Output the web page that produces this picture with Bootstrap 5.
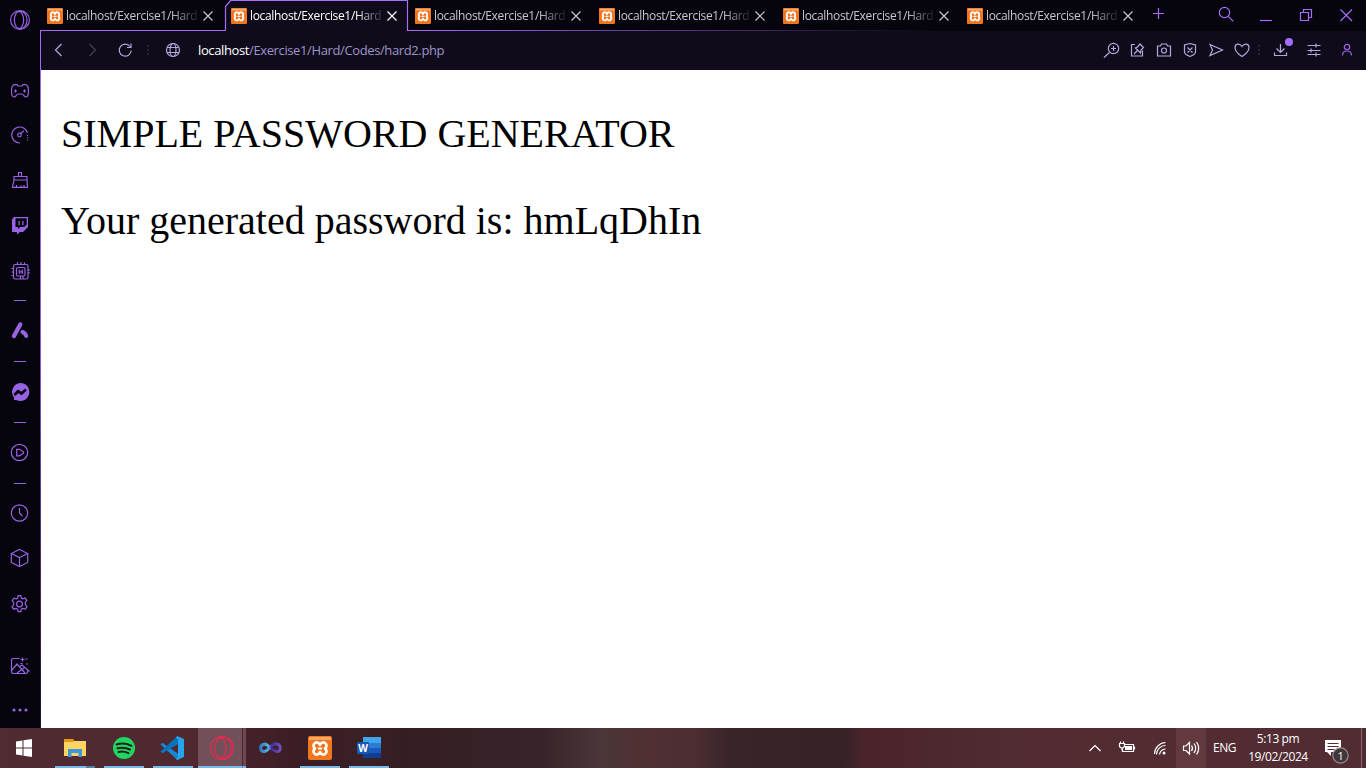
<!DOCTYPE html>
<html lang="en">
<head>
<meta charset="utf-8">
<meta name="viewport" content="width=device-width, initial-scale=1">
<title>localhost/Exercise1/Hard/Codes/hard2.php</title>
<link href="https://cdn.jsdelivr.net/npm/bootstrap@5.3.0/dist/css/bootstrap.min.css" rel="stylesheet">
<style>
:root{--accent:#a56dfb;--side:#9763e3;--soft:#b5a9dc;--dark:#06040c;--panel:#0f0b1b}
body{width:1366px;height:768px;overflow:hidden;font-family:"Open Sans","Noto Sans",sans-serif;background:#fff}
svg{display:block;flex:none;fill:none;stroke:currentColor;stroke-width:1.2}
svg .f{fill:currentColor;stroke:none}
.side{width:41px;background:var(--dark);color:var(--side);position:relative}
.side::after{content:"";position:absolute;right:0;top:30px;bottom:0;width:1px;background:linear-gradient(#a56dfb,#8d5cd8 45%,#4c3076 75%,#1c1030)}
.slot{height:45px}.slot-a{height:46px}.slot-d{height:15px;padding-right:2px}
.up{padding-bottom:2px}
.slot-d i{width:12px;height:1px;background:var(--side)}
.tabs{height:31px;background:var(--dark);position:relative}
.tabs .edge{position:absolute;left:0;top:0;z-index:1}
.tb{width:184px;height:31px;padding-left:6px;color:#c9c6d2;z-index:2;position:relative}
.tb.on{color:#fff}
.tb span{width:133px;font-size:12px;letter-spacing:-.34px;line-height:18px;margin-left:3px;margin-right:3px;-webkit-mask-image:linear-gradient(90deg,#000 106px,rgba(0,0,0,.15) 131px)}
.wb{width:40px;height:31px;color:var(--accent)}
.tools{height:39px;background:var(--panel);color:var(--soft);padding-bottom:1px}
.tools .q{width:26px}
.url{font-size:13px;letter-spacing:-.38px;color:#9f94c8;line-height:18px;margin-left:3px}
.url b{font-weight:400;color:#fff}
.page{padding:40px 20px;font-family:"Liberation Serif",serif;font-size:40px;line-height:47px;color:#000}
.page p{margin:0 0 40px}
.task{height:40px;color:#fff;background:linear-gradient(90deg,#502b31 0,#502930 190px,#46222a 245px,#3b1d24 300px,#3a2025 370px,#351e23 400px,#36242a 540px,#4a3638 600px,#503033 645px,#4c2d32 695px,#382529 730px,#362226 845px,#4b242b 865px,#502b31 1000px,#532c32 1100px,#512c32)}
.app{width:49px;height:40px;position:relative}
.app.run::after{content:"";position:absolute;left:5px;width:40px;bottom:0;height:2px;background:#76b9ed}
.app.multi::after{background:linear-gradient(90deg,#76b9ed 31px,#527fa4 31px)}
.app.cur{background:linear-gradient(90deg,transparent 1px,#735058 1px,#70505a 45px,#49292f 45px,#49292f 46px,#6a4a50 46px)}
.app.cur::after{left:1px;width:48px;background:linear-gradient(90deg,#76b9ed 44px,#5388b0 44px,#5388b0 45px,#76b9ed 45px)}
.tray{font-size:12px;line-height:18px;letter-spacing:-.4px}
.snd{background:#61393f}
.endline{width:1px;background:#8a6c70;margin-right:4px}
</style>
</head>
<body class="d-flex flex-column">
<svg width="0" height="0" class="position-absolute"><defs>
<linearGradient id="fade" gradientUnits="userSpaceOnUse" x1="366" y1="0" x2="900" y2="0"><stop stop-color="#a56dfb"/><stop offset="1" stop-color="#a56dfb" stop-opacity="0"/></linearGradient>
<linearGradient id="vs" gradientUnits="userSpaceOnUse" x1="13" y1="0" x2="36" y2="0"><stop stop-color="#2a73ba"/><stop offset=".4" stop-color="#55b1e8"/><stop offset=".55" stop-color="#452a9a"/><stop offset="1" stop-color="#7058c4"/></linearGradient>
<symbol id="xampp" viewBox="0 0 24 24"><rect width="24" height="24" rx="2" fill="#f0761f" stroke="none"/><path d="M1 1h22v3H1z" fill="#f9a764" stroke="none"/><path d="M12 9A3.300 3.300 0 1 0 7 12.500A3.300 3.300 0 1 0 12 16A3.300 3.300 0 1 0 17 12.500A3.300 3.300 0 1 0 12 9z" fill="none" stroke="#fff" stroke-width="2.700" stroke-linejoin="round"/><path d="M10 12.500h4" stroke="#fff" stroke-width="2"/></symbol>
<symbol id="x" viewBox="0 0 12 12"><path d="M1.500 1.500l9 9M10.500 1.500l-9 9"/></symbol>
</defs></svg>
<div class="d-flex flex-grow-1">
<aside class="side d-flex flex-column">
<div class="d-flex align-items-center ps-2" style="height:40px;margin-bottom:28px"><svg width="24" height="24"><circle cx="12" cy="12" r="9.400"/><ellipse cx="11" cy="12" rx="4.600" ry="8.500"/><path d="M9.500 4c7-2.500 9.500 4 9.500 8s-2.500 10.500-9.500 8"/></svg></div>
<div class="slot d-flex align-items-center ps-2"><svg width="24" height="24"><path d="M7 5.700h2l1 1.300h4l1-1.300h2c3 0 3.500 3 3.500 6.300 0 3-.4 6-2.500 6-2 0-2.500-3-4-3h-4c-1.500 0-2 3-4 3-2.100 0-2.500-3-2.500-6 0-3.300.5-6.300 3.500-6.300z"/><path d="M6 12h3M7.500 10.500v3M15 12h3M16.500 10.500v3"/></svg></div>
<div class="slot up d-flex align-items-center ps-2"><svg width="24" height="24"><path d="M12 20a8 8 0 1 1 7.500-10"/><path d="M19.500 12v5.500" stroke-dasharray="1 1.200"/><circle cx="11.500" cy="12" r="1.800"/><path d="M12.800 10.700l3-3"/></svg></div>
<div class="slot up d-flex align-items-center ps-2"><svg width="24" height="24"><path d="M10.500 8.500v-4h3v4M6 8.500h13v3.500H6zM6 12l-1.500 7.300h15L19 12M8.500 19v-2M16 19v-2M13 19v-1.500"/></svg></div>
<div class="slot up d-flex align-items-center ps-2"><svg width="24" height="24"><path class="f" fill-rule="evenodd" d="M6 4h14v10l-5 5h-3l-3 2.500V19H4V6.500zm1.500 1.200V14H10v2l2.200-2h4l2.500-2.500V5.200zM10.500 8h1.300v4h-1.300zm3.700 0h1.300v4h-1.300z"/></svg></div>
<div class="slot d-flex align-items-center ps-2"><svg width="24" height="24"><rect x="5.500" y="5.500" width="14.500" height="14.500" rx="1.500"/><rect x="8.500" y="8.500" width="8.500" height="8.500" rx="1.500"/><path d="M11.300 10.500v4.500M14.300 10.500v4.500M11 12.800h3.500M9.500 3v3M13 3v3M16.500 3.500v2M3.500 9.500h2M3.500 13h2M3.500 16.500h2M20 11h2M20 14h2M12.500 17v3M15 17v3"/></svg></div>
<div class="slot-d d-flex align-items-center justify-content-center"><i></i></div>
<div class="slot-a d-flex align-items-center ps-2"><svg width="24" height="24"><path d="M12.300 5.500L6 17" stroke-width="4.300" stroke-linecap="round"/><path d="M14.500 13c2 .7 3 1.700 3.700 4" stroke-width="4" stroke-linecap="round"/></svg></div>
<div class="slot-d d-flex align-items-center justify-content-center"><i></i></div>
<div class="slot-a d-flex align-items-center ps-2"><svg width="24" height="24"><path class="f" d="M12.200 3a9 9 0 1 1-4 17H6v-2.500A9 9 0 0 1 12.200 3z"/><path d="M6.500 15l3.500-3.700 3.500 2.200 4.500-4" stroke="#06040c" stroke-width="2.700"/></svg></div>
<div class="slot-d d-flex align-items-center justify-content-center"><i></i></div>
<div class="slot-a d-flex align-items-center ps-2"><svg width="24" height="24"><circle cx="11.500" cy="11.500" r="8.200"/><path d="M8.700 8.300v6.500h2.800l4-2.600v-1.400l-4-2.500z"/></svg></div>
<div class="slot-d d-flex align-items-center justify-content-center"><i></i></div>
<div class="slot up d-flex align-items-center ps-2"><svg width="24" height="24"><circle cx="11.500" cy="12" r="8.200"/><path d="M11.500 7v5l3 3.200"/></svg></div>
<div class="slot up d-flex align-items-center ps-2"><svg width="24" height="24"><path d="M11.500 3.500l8.200 4v9l-8.200 4-8.200-4v-9zM3.300 7.500l8.200 4 8.200-4M11.500 11.500v9"/></svg></div>
<div class="slot d-flex align-items-center ps-2"><svg width="24" height="24"><circle cx="11.500" cy="12" r="2.900"/><path d="M9.700 6l.5-2.300h2.600l.5 2.300 1.500.8 2.300-.8 1.700 2.400-1.500 1.800v2.400l1.700 1.900-1.700 2.500-2.500-.7-1.500.9-.5 2.500h-2.600L9.700 17.400l-1.500-.9-2.500.7L4 14.700l1.700-1.900v-2.200L4.200 8.700l1.700-2.500 2.300.7z"/></svg></div>
<div class="slot up d-flex align-items-center ps-2" style="margin-top:18px"><svg width="24" height="24"><path d="M11.500 4.500H5.200a1.700 1.700 0 0 0-1.700 1.700v11.600a1.700 1.700 0 0 0 1.700 1.700h12.600a1.700 1.700 0 0 0 1.700-1.700V17M4 16l5-6 8 9M11 13l3-2 7.500 6.500M9 19l7-5M14.500 3.500v4M12.500 5.500h4M17.500 5h2M12.500 9.500h2M18 10h2"/></svg></div>
<div class="d-flex align-items-center ps-2" style="height:39px;padding-top:3px"><svg width="24" height="24"><circle class="f" cx="6" cy="12" r="1.600"/><circle class="f" cx="12" cy="12" r="1.600"/><circle class="f" cx="18" cy="12" r="1.600"/></svg></div>
</aside>
<div class="flex-grow-1 d-flex flex-column">
<header class="tabs d-flex">
<svg class="edge" width="1325" height="31"><path d="M184.500 31V6l6-5.500h176V31z" fill="#0f0b1b" stroke="none"/><path d="M0 30.500h183.500q1 0 1-1V6.500l5-6h177V30.500" stroke="#a56dfb"/><path d="M366 30h959v1H366z" fill="url(#fade)" stroke="none"/></svg>
<div class="tb d-flex align-items-center text-nowrap"><svg width="16" height="16"><use href="#xampp"/></svg><span>localhost/Exercise1/Hard</span><svg width="12" height="12"><use href="#x"/></svg></div>
<div class="tb on d-flex align-items-center text-nowrap"><svg width="16" height="16"><use href="#xampp"/></svg><span>localhost/Exercise1/Hard</span><svg width="12" height="12"><use href="#x"/></svg></div>
<div class="tb d-flex align-items-center text-nowrap"><svg width="16" height="16"><use href="#xampp"/></svg><span>localhost/Exercise1/Hard</span><svg width="12" height="12"><use href="#x"/></svg></div>
<div class="tb d-flex align-items-center text-nowrap"><svg width="16" height="16"><use href="#xampp"/></svg><span>localhost/Exercise1/Hard</span><svg width="12" height="12"><use href="#x"/></svg></div>
<div class="tb d-flex align-items-center text-nowrap"><svg width="16" height="16"><use href="#xampp"/></svg><span>localhost/Exercise1/Hard</span><svg width="12" height="12"><use href="#x"/></svg></div>
<div class="tb d-flex align-items-center text-nowrap"><svg width="16" height="16"><use href="#xampp"/></svg><span>localhost/Exercise1/Hard</span><svg width="12" height="12"><use href="#x"/></svg></div>
<div class="wb" style="width:26px"><svg width="26" height="28"><path d="M13.500 8v11M8 13.500h11"/></svg></div>
<div class="d-flex ms-auto">
<div class="wb"><svg width="40" height="31"><circle cx="18.500" cy="12.500" r="5.200"/><path d="M22.300 16.300l5 5"/></svg></div>
<div class="wb"><svg width="40" height="31"><path d="M14 20.500h12"/></svg></div>
<div class="wb"><svg width="40" height="31"><path d="M14.500 12.500h8v8h-8zM17.500 12.500v-3h8v8h-3"/></svg></div>
<div class="wb"><svg width="40" height="31"><path d="M14.500 9.500l11.500 11.500M26 9.500L14.500 21"/></svg></div>
</div>
</header>
<div class="tools d-flex align-items-center">
<svg width="36" height="24"><path d="M20.500 6l-6 6 6 6"/></svg>
<svg width="32" height="24" opacity=".32"><path d="M12.500 6l6 6-6 6"/></svg>
<svg width="34" height="24"><path d="M21 8.500a6 6 0 1 0 1.200 4M22 5.500v4h-4"/></svg>
<svg width="12" height="24" opacity=".14"><path class="f" d="M4 7h2v2H4zM4 11h2v2H4zM4 15h2v2H4z"/></svg>
<svg width="36" height="24" class="me-1"><circle cx="18" cy="12" r="6.500"/><ellipse cx="18" cy="12" rx="3" ry="6.500"/><path d="M12.500 9.500h11M12.500 14.500h11"/></svg>
<div class="url text-nowrap"><b>localhost</b>/Exercise1/Hard/Codes/hard2.php</div>
<div class="d-flex ms-auto">
<svg class="q" height="24"><circle cx="15.500" cy="10.500" r="5.200"/><path d="M11.500 14.500l-5.500 5M13 10.500h5M15.500 8v5"/></svg>
<svg class="q" height="24"><path d="M11 6.500H7.500v11.500H18.500v-5.500M10 16l3.500-3.500M11.500 10l5 5 .5-3 2.500-2.500-3.500-3.500L13.500 9z"/></svg>
<svg class="q" height="24"><path d="M7.500 8h3l1-2h5l1 2h3v10h-13z"/><circle cx="14" cy="12.500" r="2.500"/></svg>
<svg class="q" height="24"><path d="M14 5.500l5.500 1.500v7c0 2.500-3 3.500-5.500 4.500-2.500-1-5.500-2-5.500-4.500V7zM11.500 9.500l5 5M16.500 9.500l-5 5"/></svg>
<svg class="q" height="24"><path d="M8 6.500l12.500 5.500L8 17.500l2.500-5.500z"/></svg>
<svg class="q" height="24"><path d="M14 18.500C8.500 15 7 12 7 9.500c0-3.500 4.500-5 7-1 2.500-4 7-2.500 7 1 0 2.500-1.500 5.500-7 9z"/></svg>
<svg width="9" height="24" opacity=".14"><path class="f" d="M4 7h2v2H4zM4 11h2v2H4zM4 15h2v2H4z"/></svg>
<svg width="34" height="26" style="margin-top:-2px"><path d="M17.500 8v8M13.500 12.500l4 4 4-4M11.500 16.500v3h12v-3"/><circle cx="26" cy="6" r="4" fill="#a56dfb" stroke="none"/></svg>
<svg width="33" height="24"><path d="M10.500 7.500h13M10.500 12.500h13M10.500 16.500h13M19 5.500v4M14 10.500v4M19 14.500v4"/></svg>
<svg width="36" height="24" style="color:#9863e4"><circle cx="17" cy="9" r="2.700"/><path d="M12.500 17.500c0-3 1.500-4.500 4.500-4.500s4.500 1.500 4.500 4.500"/></svg>
</div>
</div>
<main class="page flex-grow-1 text-nowrap"><p>SIMPLE PASSWORD GENERATOR</p><p>Your generated password is: hmLqDhIn</p></main>
</div>
</div>
<footer class="task d-flex">
<div style="width:50px"><svg width="48" height="40"><path class="f" d="M16 13.500l6.500-1v7H16zM23.500 12.300L32 11v8.500h-8.500zM16 20.500h6.500v7l-6.500-1zM23.500 20.500H32V29l-8.500-1.300z"/></svg></div>
<div class="app run multi"><svg width="49" height="40" style="stroke:none"><path d="M14 11h9l1 2h12v15H14z" fill="#fcd462"/><path d="M14 11h9l1 2-1 1h-9z" fill="#df9a13"/><path d="M18 21h14v8h-3.500v-4h-7v4H18z" fill="#3c98dc"/></svg></div>
<div class="app run"><svg width="49" height="40"><circle cx="25" cy="20" r="11" fill="#1fd662" stroke="none"/><path d="M17.500 16.500c5-1.500 10.500-1 15 1.300M18.500 20.300c4.500-1.200 8.500-.8 12.500 1.200M19.500 24c3.500-.8 6.500-.5 10 1.200" stroke="#231f1f" stroke-width="2" stroke-linecap="round"/></svg></div>
<div class="app run"><svg width="49" height="40" style="stroke:none"><path d="M12.500 16.500l2-1.700L31 26.500v5.500l-2-.5z" fill="#1689d1"/><path d="M12.500 23.500L29 8.500l2 1v6L14.500 25.300z" fill="#0874bc"/><path d="M29 8l7 3v18l-7 3-1-1.500 2-1V11l-2-1z" fill="#26a4ed"/></svg></div>
<div class="app cur run"><svg width="49" height="40" style="stroke:#e72952"><circle cx="25" cy="20" r="11.400"/><ellipse cx="23.500" cy="20" rx="5.500" ry="10"/><path d="M21 10c10-3 13 4 13 10s-3 13-13 10"/></svg></div>
<div class="app"><svg width="49" height="40"><path d="M24 20c-3-4-5-4.500-7-3.500-3.500 1.500-3 7 1 7 5 0 7-9 13-7.500 4.500 1 4 8 0 7.500-3-.3-4-2-7-3.500z" stroke="url(#vs)" stroke-width="3"/></svg></div>
<div class="app run"><svg width="49" height="40"><use href="#xampp" x="13" y="8" width="24" height="24"/></svg></div>
<div class="app run"><svg width="49" height="40" style="stroke:none"><path d="M19 9h18v6H19z" fill="#41a5ee"/><path d="M19 15h18v5H19z" fill="#2b7cd3"/><path d="M19 20h18v5H19z" fill="#185abd"/><path d="M19 25h18v5H19z" fill="#103f91"/><rect x="13" y="14" width="12" height="12" rx="1" fill="#1858b5"/><text x="19" y="23.500" fill="#fff" text-anchor="middle" font-size="10" font-weight="700">W</text></svg></div>
<div class="tray d-flex ms-auto">
<svg width="32" height="40"><path d="M10.500 23l5.500-5.500 5.500 5.500"/></svg>
<svg width="32" height="40"><path d="M14 16.500h8.500v7h-11v-3M23.500 18.500v3M8.500 15.500h5v3q-2.500 3-5 0zM9.500 13.500v2M12.500 13.500v2M11 20v2.500"/><path class="f" d="M14 18h7v4h-7z"/></svg>
<svg width="33" height="40"><path d="M13.500 26.500a9 9 0 0 1 9-9M16.500 26.500a6.500 6.500 0 0 1 6-5.500"/><path d="M11.500 26a11.500 11.500 0 0 1 11-11.500"/><circle class="f" cx="21" cy="25" r="1.500"/></svg>
<svg class="snd" width="30" height="40"><path d="M7.500 18h2.500l3.500-3.500v11.500L10 22.500H7.500zM15.500 17.500q2 2.700 0 5.500M18 15.500q3.500 4.700 0 9.500M20.500 14q4.500 6.200 0 12.500"/></svg>
<div class="d-flex align-items-center justify-content-center" style="width:37px">ENG</div>
<div class="text-center d-flex flex-column justify-content-center" style="width:70px"><div>5:13 pm</div><div>19/02/2024</div></div>
<svg width="48" height="40"><path class="f" d="M12 12h16v12H18v4l-4-4h-2z"/><path d="M14.500 15.500h11M14.500 18.500h11M14.500 21.500h7" stroke="#532c32"/><circle cx="27.500" cy="27.500" r="7.700" fill="#3e383b" stroke="#9b8b8e"/><text x="27.500" y="31.500" text-anchor="middle" fill="#fff" stroke="none" font-size="11">1</text></svg>
<div class="endline"></div>
</div>
</footer>
<script src="https://cdn.jsdelivr.net/npm/bootstrap@5.3.0/dist/js/bootstrap.bundle.min.js"></script>
</body>
</html>
